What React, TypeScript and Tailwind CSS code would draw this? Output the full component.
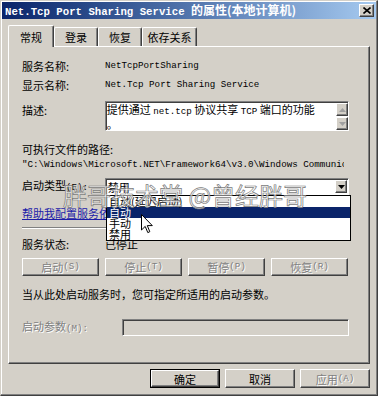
import React from "react";

const raised =
  "border border-t-white border-l-white border-r-[#404040] border-b-[#404040] shadow-[inset_-1px_-1px_0_#808080]";
const sunken =
  "border border-t-[#808080] border-l-[#808080] border-r-white border-b-white shadow-[inset_1px_1px_0_#404040]";
const disabled = "text-[#808080] [text-shadow:1px_1px_0_#ffffff]";

function M({ children }: { children: React.ReactNode }) {
  return <span className="font-['Liberation_Mono',monospace] text-[9.2px]">{children}</span>;
}

function Tab({ label, active, w }: { label: string; active?: boolean; w: string }) {
  return (
    <div
      className={`${w} flex items-center justify-center border-t border-l border-r border-t-white border-l-white border-r-[#404040] shadow-[inset_-1px_0_0_#808080] rounded-t-[2px] bg-[#d4d0c8] ${
        active ? "h-[22px] -mb-[1px] relative z-10" : "h-[19px]"
      }`}
    >
      <span className="leading-[14px]">{label}</span>
    </div>
  );
}

function Btn({ children, off, def, w = "w-[77px]" }: { children: React.ReactNode; off?: boolean; def?: boolean; w?: string }) {
  const inner = (
    <div className={`${raised} h-full w-full flex items-center justify-center leading-[14px] ${off ? disabled : ""}`}>
      {children}
    </div>
  );
  if (def) {
    return <div className={`${w} h-full border border-black`}>{inner}</div>;
  }
  return <div className={`${w} h-full`}>{inner}</div>;
}

function Arrow({ down, off }: { down?: boolean; off?: boolean }) {
  return (
    <svg width="7" height="4" viewBox="0 0 7 4">
      <path d={down ? "M0 0 H7 L3.5 4 Z" : "M0 4 H7 L3.5 0 Z"} fill={off ? "#a0a0a0" : "#000"} />
    </svg>
  );
}

export default function App() {
  const path =
    '"C:\\Windows\\Microsoft.NET\\Framework64\\v3.0\\Windows Communication Foundation\\SMSvcHost.exe"';

  return (
    <div className="w-[378px] h-[396px] relative overflow-hidden bg-[#d4d0c8] border border-t-[#d4d0c8] border-l-[#d4d0c8] border-r-[#404040] border-b-[#404040] shadow-[inset_-1px_-1px_0_#808080,inset_1px_1px_0_#ffffff] p-[1px] font-['Noto_Sans_CJK_SC',sans-serif] text-[11px] text-black">
      {/* title bar */}
      <div className="h-[17px] flex items-center justify-between bg-gradient-to-r from-[#0a246a] to-[#a6caf0] pl-[3px] pr-[2px]">
        <div className="text-white font-bold whitespace-nowrap leading-[16px]">
          <span className="font-['Liberation_Mono',monospace] text-[10.7px]">Net.Tcp Port Sharing Service </span>
          <span className="text-[12px]">的属性(本地计算机)</span>
        </div>
        <div className={`${raised} bg-[#d4d0c8] w-[15px] h-[13px] flex items-center justify-center`}>
          <svg width="8" height="7" viewBox="0 0 8 7">
            <path d="M0.5 0.5 L7.5 6.5 M7.5 0.5 L0.5 6.5" stroke="#000" strokeWidth="1.6" />
          </svg>
        </div>
      </div>

      {/* tabs */}
      <div className="mt-[6px] ml-[6px] h-[21px] flex items-end">
        <Tab label="常规" active w="w-[46px]" />
        <Tab label="登录" w="w-[44px]" />
        <Tab label="恢复" w="w-[44px]" />
        <Tab label="依存关系" w="w-[55px]" />
      </div>

      {/* panel */}
      <div className="ml-[6px] w-[362px] h-[318px] border border-t-white border-l-white border-r-[#404040] border-b-[#404040] shadow-[inset_-1px_-1px_0_#808080] pl-[13px] pr-[20px]">
        <div className="mt-[12px] flex h-[14px] leading-[14px]">
          <div className="w-[83px]">服务名称:</div>
          <M>NetTcpPortSharing</M>
        </div>
        <div className="mt-[5px] flex h-[14px] leading-[14px]">
          <div className="w-[83px]">显示名称:</div>
          <M>Net.Tcp Port Sharing Service</M>
        </div>
        <div className="mt-[9px] flex">
          <div className="w-[83px] leading-[14px] pt-[2px]">描述:</div>
          <div className={`${sunken} bg-white w-[245px] h-[30px] flex`}>
            <div className="flex-1 px-[1px] leading-[13px] pt-[1px]">
              提供通过 <M>net.tcp</M> 协议共享 <M>TCP</M> 端口的功能
              <br />。
            </div>
            <div className="w-[12px] flex flex-col gap-[1px] pt-[1px]">
              <div className={`${raised} bg-[#d4d0c8] h-[13px] flex items-center justify-center`}>
                <Arrow off />
              </div>
              <div className={`${raised} bg-[#d4d0c8] h-[13px] flex items-center justify-center`}>
                <Arrow down off />
              </div>
            </div>
          </div>
        </div>
        <div className="mt-[11px] h-[14px] leading-[14px]">可执行文件的路径:</div>
        <div className="h-[13px] leading-[13px] whitespace-nowrap overflow-hidden w-[322px]">
          <M>{path}</M>
        </div>
        <div className="mt-[9px] flex items-center h-[17px]">
          <div className="w-[83px] leading-[14px]">
            启动类型<M>(E):</M>
          </div>
          <div className={`${sunken} bg-white w-[245px] h-[17px] flex items-center`}>
            <div className="flex-1 pl-[2px] leading-[14px]">禁用</div>
            <div className={`${raised} bg-[#d4d0c8] w-[12px] h-[13px] mr-[1px] flex items-center justify-center`}>
              <Arrow down />
            </div>
          </div>
        </div>
        <div className="mt-[11px] h-[14px] leading-[14px] text-[#1c1ca8] underline">帮助我配置服务依存关系</div>
        <div className="mt-[7px] h-[2px] border-t border-t-[#808080] border-b border-b-white" />
        <div className="mt-[8px] flex h-[14px] leading-[14px]">
          <div className="w-[83px]">服务状态:</div>
          <div>已停止</div>
        </div>
        <div className="mt-[7px] h-[18px] flex gap-[6px]">
          <Btn off>
            启动<M>(S)</M>
          </Btn>
          <Btn off>
            停止<M>(T)</M>
          </Btn>
          <Btn off>
            暂停<M>(P)</M>
          </Btn>
          <Btn off>
            恢复<M>(R)</M>
          </Btn>
        </div>
        <div className="mt-[11px] h-[14px] leading-[14px]">当从此处启动服务时，您可指定所适用的启动参数。</div>
        <div className="mt-[18px] flex items-center h-[17px]">
          <div className={`w-[100px] leading-[14px] ${disabled}`}>
            启动参数<M>(M):</M>
          </div>
          <div className={`${sunken} bg-[#d4d0c8] w-[228px] h-[17px]`} />
        </div>
      </div>

      {/* dialog buttons */}
      <div className="mt-[5px] h-[19px] flex justify-end gap-[5px] pr-[6px]">
        <Btn def w="w-[70px]">确定</Btn>
        <Btn w="w-[70px]">取消</Btn>
        <Btn off w="w-[70px]">
          应用<M>(A)</M>
        </Btn>
      </div>

      {/* open dropdown list */}
      <div className="absolute left-[105px] top-[194px] w-[245px] h-[46px] bg-white border border-black leading-[11px]">
        <div className="h-[11px] pl-[2px]">自动(延迟启动)</div>
        <div className="h-[11px] pl-[2px] bg-[#0a246a] text-white">自动</div>
        <div className="h-[11px] pl-[2px]">手动</div>
        <div className="h-[11px] pl-[2px]">禁用</div>
      </div>

      {/* watermark */}
      <div className="absolute left-[62px] top-[181px] whitespace-nowrap text-[24px] leading-[26px] text-white/70 [-webkit-text-stroke:0.7px_#7a7a7a] pointer-events-none">
        胖哥技术堂 @曾经胖哥
      </div>

      {/* mouse cursor */}
      <svg className="absolute left-[140px] top-[213px]" width="12" height="20" viewBox="0 0 12 20">
        <path d="M0.5 0.5 V16 L4.2 12.4 L6.8 18.6 L8.8 17.7 L6.3 11.6 L11.3 11.6 Z" fill="#fff" stroke="#000" strokeWidth="1" />
      </svg>
    </div>
  );
}
